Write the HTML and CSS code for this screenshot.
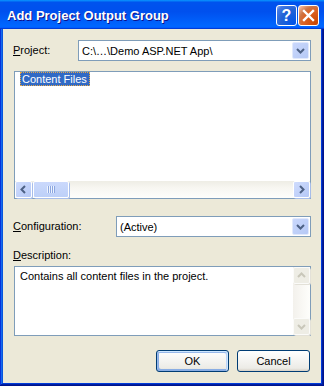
FILE: index.html
```html
<!DOCTYPE html>
<html lang="en">
<head>
  <meta charset="utf-8"/>
  <title>Add Project Output Group</title>
  <link rel="stylesheet" href="styles.css">
</head>
<body>
  <div class="window">

    <div class="titlebar">
      <span class="title">Add Project Output Group</span>
      <div class="title-buttons">
        <button class="tb-btn tb-help" aria-label="Help">?</button>
        <button class="tb-btn tb-close" aria-label="Close">
          <svg viewBox="0 0 21 21" width="21" height="21">
            <path d="M6 6l9 9M15 6l-9 9" stroke="#fff" stroke-width="2.4" stroke-linecap="square"/>
          </svg>
        </button>
      </div>
    </div>

    <div class="client">
      <div class="field-row">
        <label class="label label-project"><u>P</u>roject:</label>
        <div class="combo">
          <span class="combo-text">C:\…\Demo ASP.NET App\</span>
          <span class="drop-btn">
            <svg viewBox="0 0 15 17" width="15" height="17">
              <path d="M4 7l3.5 3.5L11 7" fill="none" stroke="#4d6185" stroke-width="2"/>
            </svg>
          </span>
        </div>
      </div>

      <div class="listbox">
        <div class="list-items">
          <span class="list-item selected">Content Files</span>
        </div>
        <div class="hscroll">
          <span class="sb-btn">
            <svg viewBox="0 0 15 15" width="15" height="15">
              <path d="M9 4l-3.5 3.5L9 11" fill="none" stroke="#4d6185" stroke-width="2"/>
            </svg>
          </span>
          <span class="sb-thumb"><span class="grip"></span></span>
          <span class="sb-track"></span>
          <span class="sb-btn">
            <svg viewBox="0 0 15 15" width="15" height="15">
              <path d="M6 4l3.5 3.5L6 11" fill="none" stroke="#4d6185" stroke-width="2"/>
            </svg>
          </span>
        </div>
      </div>

      <div class="field-row config-row">
        <label class="label label-config"><u>C</u>onfiguration:</label>
        <div class="combo">
          <span class="combo-text">(Active)</span>
          <span class="drop-btn">
            <svg viewBox="0 0 15 17" width="15" height="17">
              <path d="M4 7l3.5 3.5L11 7" fill="none" stroke="#4d6185" stroke-width="2"/>
            </svg>
          </span>
        </div>
      </div>

      <label class="label desc-label"><u>D</u>escription:</label>
      <div class="textbox">
        <div class="textbox-text">Contains all content files in the project.</div>
        <div class="vscroll">
          <span class="sb-btn disabled">
            <svg viewBox="0 0 15 15" width="15" height="15">
              <path d="M4 9l3.5-3.5L11 9" fill="none" stroke="#c9c7ba" stroke-width="2"/>
            </svg>
          </span>
          <span class="sb-track"></span>
          <span class="sb-btn disabled">
            <svg viewBox="0 0 15 15" width="15" height="15">
              <path d="M4 6l3.5 3.5L11 6" fill="none" stroke="#c9c7ba" stroke-width="2"/>
            </svg>
          </span>
        </div>
      </div>

      <div class="button-row">
        <button class="btn btn-default">OK</button>
        <button class="btn">Cancel</button>
      </div>
    </div>
  </div>
</body>
</html>
```

FILE: styles.css
```css
* {
  box-sizing: border-box;
}

body {
  margin: 0;
  font-family: "Liberation Sans", Arial, sans-serif;
  font-size: 11px;
  color: #000;
}

.window {
  width: 324px;
  height: 386px;
  background-color: #ece9d8;
  padding: 0 3px 3px;
  display: flex;
  flex-direction: column;
  box-shadow: inset -1px -1px #00138c, inset 1px 1px #0831d9,
    inset -2px -2px #001ea0, inset 2px 2px #166aee,
    inset -3px -3px #003bda, inset 3px 3px #0855dd;
}

/* title bar */
.titlebar {
  height: 29px;
  margin: 0 -3px;
  display: flex;
  align-items: flex-start;
  padding: 0 5px 0 7px;
  background: linear-gradient(180deg, #0997ff, #0053ee 8%, #0050ee 40%, #0066ff 88%, #0066ff 93%, #005bff 95%, #003dd7 96%, #003dd7);
}

.title {
  flex: 1;
  margin-top: 8px;
  color: #fff;
  font-size: 13px;
  font-weight: bold;
  line-height: 15px;
  text-shadow: 1px 1px #0f1089;
}

.title-buttons {
  display: flex;
  gap: 1px;
  margin-top: 5px;
}

.tb-btn {
  width: 21px;
  height: 21px;
  padding: 0;
  border: 1px solid #fff;
  border-radius: 3px;
  display: flex;
  align-items: center;
  justify-content: center;
  color: #fff;
  font-family: "Liberation Sans", Arial, sans-serif;
  font-size: 16px;
  font-weight: bold;
}

.tb-help {
  background: radial-gradient(circle at 90% 90%, #0054e9 0%, #2263d5 55%, #4479e4 85%, #a3bbec 100%);
}

.tb-close {
  background: radial-gradient(circle at 90% 90%, #cc4600 0%, #dc6527 55%, #cd7546 70%, #ffccb2 100%);
}

.tb-close svg {
  margin: -1px;
}

/* dialog body */
.client {
  flex: 1;
  padding: 11px 10px 0;
  display: flex;
  flex-direction: column;
}

.field-row {
  display: flex;
  align-items: center;
  height: 21px;
}

.config-row {
  margin-top: 17px;
}

.label {
  line-height: 13px;
}

.label-project {
  width: 65px;
}

.label-config {
  width: 103px;
}

.combo {
  flex: 1;
  height: 21px;
  border: 1px solid #7f9db9;
  background-color: #fff;
  display: flex;
  align-items: center;
  padding: 1px;
}

.combo-text {
  flex: 1;
  padding-left: 2px;
}

.drop-btn {
  width: 17px;
  height: 17px;
  display: flex;
  align-items: center;
  justify-content: center;
  border: 1px solid #e1e9fc;
  border-radius: 2px;
  background: linear-gradient(135deg, #c9d7fc, #b6c9f5);
}

/* list */
.listbox {
  margin: 10px 0 0 1px;
  height: 128px;
  border: 1px solid #7f9db9;
  background-color: #fff;
  display: flex;
  flex-direction: column;
}

.list-items {
  flex: 1;
  padding-left: 5px;
}

.list-item {
  display: inline-block;
  height: 14px;
  line-height: 14px;
  padding: 0 3px 0 2px;
}

.selected {
  background-color: #316ac5;
  color: #fff;
  outline: 1px dotted #e8a847;
  outline-offset: -1px;
}

.hscroll {
  height: 17px;
  display: flex;
  background: linear-gradient(180deg, #eeede5, #f7f6f1 40%, #fefefb);
}

.sb-track {
  flex: 1;
}

.sb-btn {
  width: 17px;
  height: 17px;
  display: flex;
  align-items: center;
  justify-content: center;
  border: 1px solid #fff;
  border-radius: 2px;
  background: linear-gradient(135deg, #cfdcfd, #b5c8f6);
  box-shadow: 1px 1px #a7bdea;
}

.sb-thumb {
  width: 36px;
  height: 17px;
  margin-left: 1px;
  display: flex;
  align-items: center;
  justify-content: center;
  border: 1px solid #fff;
  border-radius: 2px;
  background: linear-gradient(180deg, #cbd9fc, #bdd0f8);
  box-shadow: 1px 1px #a7bdea;
}

.grip {
  width: 8px;
  height: 7px;
  background: repeating-linear-gradient(90deg, #eef4fe 0 1px, #8ca6e0 1px 2px);
}

/* description */
.desc-label {
  margin-top: 12px;
}

.textbox {
  margin: 4px 0 0 1px;
  height: 70px;
  border: 1px solid #7f9db9;
  background-color: #fff;
  display: flex;
}

.textbox-text {
  flex: 1;
  padding: 3px 5px;
  line-height: 13px;
}

.vscroll {
  width: 17px;
  display: flex;
  flex-direction: column;
  background: linear-gradient(90deg, #f3f1ec, #fefefb);
}

.sb-btn.disabled {
  background: #eeede5;
  border-color: #fbfbf9;
  box-shadow: 1px 1px #e3e1d8;
}

/* buttons */
.button-row {
  margin-top: 14px;
  padding-right: 1px;
  display: flex;
  justify-content: flex-end;
  gap: 8px;
}

.btn {
  width: 73px;
  height: 22px;
  padding: 0;
  border: 1px solid #003c74;
  border-radius: 3px;
  background: linear-gradient(180deg, #fff, #ecebe6 86%, #d6d0c5);
  font-family: "Liberation Sans", Arial, sans-serif;
  font-size: 11px;
  color: #000;
}

.btn-default {
  box-shadow: inset -1px 1px #cee7ff, inset 1px 2px #98b8ea,
    inset -2px 2px #bcd4f6, inset 1px -1px #89ade4, inset 2px -2px #89ade4;
}
```
